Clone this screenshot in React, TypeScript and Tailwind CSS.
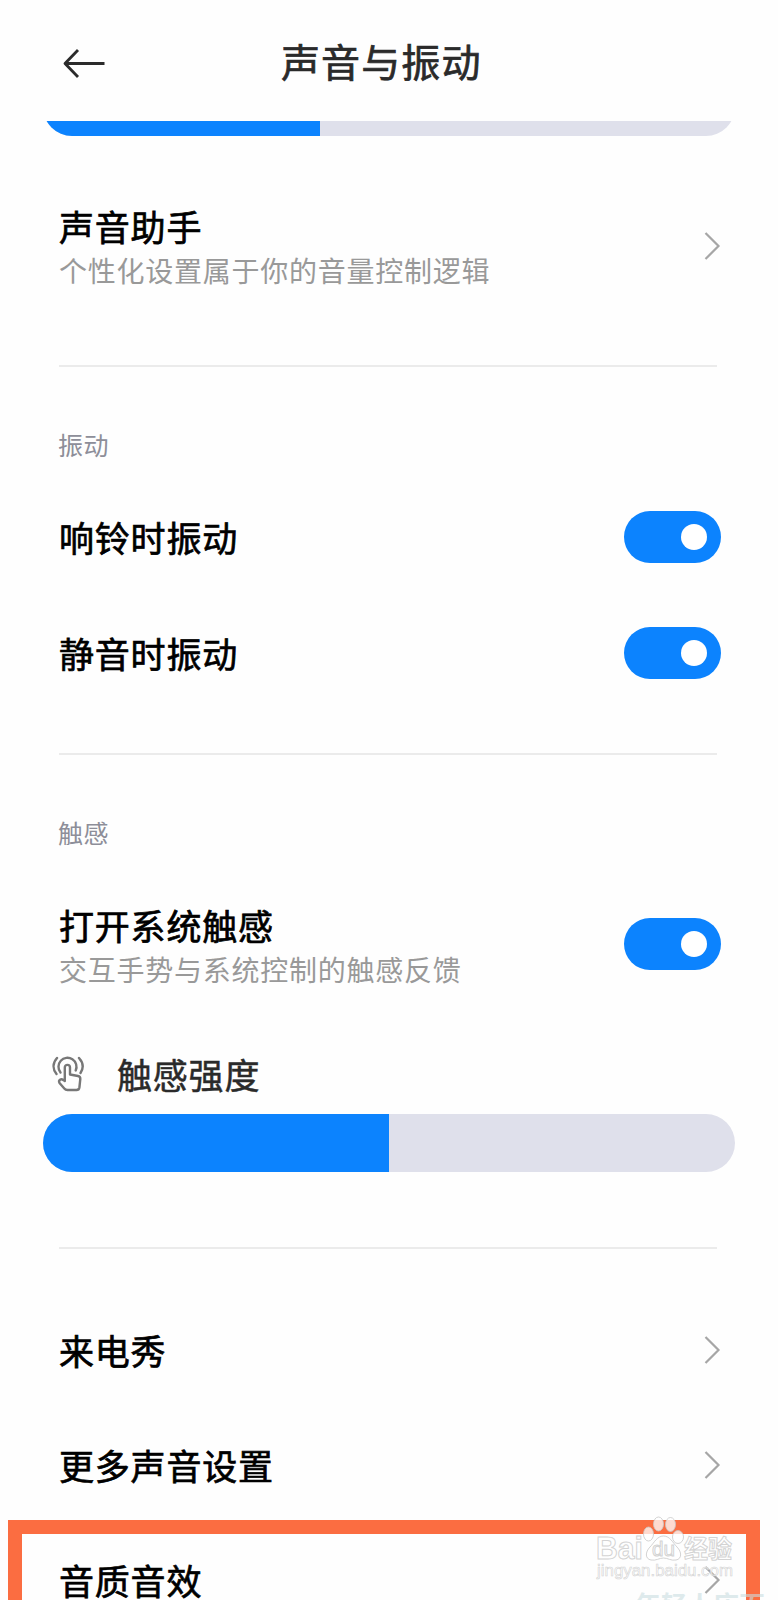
import React from "react";

function Toggle() {
  return (
    <div className="flex h-[52px] w-[97px] shrink-0 items-center justify-end rounded-full bg-[#0c83fe] pr-[14px]">
      <div className="h-[26px] w-[26px] rounded-full bg-white" />
    </div>
  );
}

function Chevron() {
  return (
    <svg width="18" height="30" viewBox="0 0 18 30" fill="none" className="shrink-0" stroke="#a6a6a6" strokeWidth="2.2">
      <path d="M2.5 2 L15.5 15 L2.5 28" />
    </svg>
  );
}

function TapIcon() {
  return (
    <svg width="32" height="36" viewBox="0 0 32 36" fill="none" stroke="#777" strokeWidth="2.4" strokeLinecap="round" strokeLinejoin="round">
      <path d="M5 2 C0.500 7 0.500 13 4.500 18" />
      <path d="M27 2 C31.500 7 31.500 12.500 28.500 17" />
      <path d="M8.500 16.500 A9 9 0 1 1 23.700 14.500" />
      <path d="M12.800 25 V11.500 a2.600 2.600 0 0 1 5.200 0 V18.500 L26 20 Q28.500 20.500 28.300 23 L27.400 31.500 Q27 34 24.500 34 H15.500 Q13.500 34 12.300 32.500 L7.500 27 Q6.400 25 8 23.800 Q9.600 22.800 11.200 24 L12.800 25" />
    </svg>
  );
}

function Title({ children }: { children: React.ReactNode }) {
  return (
    <span className="whitespace-nowrap text-[35px] leading-[44px] tracking-[0.8px] text-black [-webkit-text-stroke:0.7px_#000]">
      {children}
    </span>
  );
}

function Sub({ children }: { children: React.ReactNode }) {
  return (
    <span className="whitespace-nowrap text-[28px] leading-[44px] tracking-[0.75px] text-[#999999]">{children}</span>
  );
}

function Section({ children }: { children: React.ReactNode }) {
  return <div className="-ml-[1px] text-[25px] leading-[36px] tracking-[0.5px] text-[#8d8e99]">{children}</div>;
}

function Divider() {
  return <div className="mr-[4px] h-[2px] bg-[#ebebeb]" />;
}

function Slider({ fill }: { fill: number }) {
  return (
    <div className="h-[58px] w-[692px] shrink-0 overflow-hidden rounded-full bg-[#dfe0eb]">
      <div className="h-full bg-[#0c83fe]" style={{ width: fill }} />
    </div>
  );
}

function Watermark() {
  return (
    <svg width="160" height="84" viewBox="0 0 160 84" className="absolute left-[590px] top-[1512px]">
      <g fill="#fff" fillOpacity="0.75" stroke="#c8c8c8" strokeOpacity="0.8" strokeWidth="1">
        <ellipse cx="58.500" cy="22" rx="5" ry="7" />
        <ellipse cx="68.500" cy="12" rx="5" ry="7" />
        <ellipse cx="80.500" cy="12.500" rx="5" ry="7" />
        <ellipse cx="88" cy="25" rx="5.500" ry="6.500" />
        <path d="M73.500 24 C80 24 83 31 87 35 C92 40 92 47 86 48 C81 49 78 46 73.500 46 C69 46 66 49 61 48 C55 47 55 40 60 35 C64 31 67 24 73.500 24 Z" />
        <text x="6" y="47" fontFamily="Liberation Sans, sans-serif" fontWeight="700" fontSize="31" textLength="47" lengthAdjust="spacingAndGlyphs">Bai</text>
        <text x="62" y="44" fontFamily="Liberation Sans, sans-serif" fontSize="20" textLength="23" lengthAdjust="spacingAndGlyphs">du</text>
        <text x="94" y="46" fontFamily="'Noto Sans CJK SC', sans-serif" fontWeight="700" fontSize="25" textLength="48" lengthAdjust="spacingAndGlyphs">经验</text>
        <text x="7" y="64" fontFamily="Liberation Sans, sans-serif" fontSize="16.500" textLength="136" lengthAdjust="spacingAndGlyphs" strokeWidth="0.6">jingyan.baidu.com</text>
      </g>
    </svg>
  );
}

export default function App() {
  return (
    <div className="relative flex h-[1600px] w-[778px] flex-col overflow-hidden bg-[#fefefe] font-['Noto_Sans_CJK_SC',sans-serif]">
      <header className="flex h-[121px] shrink-0 pl-[62px]">
        <svg width="46" height="32" viewBox="0 0 46 32" fill="none" stroke="#2b2b2b" strokeWidth="2.8" className="mt-[47px] shrink-0">
          <path d="M42.500 16.500 H3 M16 3 L3 16.500 L16 30" strokeLinejoin="round" />
        </svg>
        <h1 className="ml-[173px] mt-[35px] text-[39px] leading-[50px] tracking-[1.1px] text-[#2a2a2a] [-webkit-text-stroke:0.7px_#2a2a2a]">
          声音与振动
        </h1>
      </header>

      <div className="flex h-[15px] shrink-0 items-end overflow-hidden pl-[43px]">
        <Slider fill={277} />
      </div>

      <main className="flex flex-col pl-[59px] pr-[57px]">
        <div className="mt-[68px] flex h-[84px] items-center justify-between">
          <div className="flex flex-col pt-[4px]">
            <Title>声音助手</Title>
            <Sub>个性化设置属于你的音量控制逻辑</Sub>
          </div>
          <Chevron />
        </div>
        <div className="h-[77px]" />
        <Divider />

        <div className="mt-[59px]"><Section>振动</Section></div>
        <div className="mt-[17px] flex h-[116px] items-center justify-between">
          <Title>响铃时振动</Title>
          <Toggle />
        </div>
        <div className="flex h-[115px] items-center justify-between">
          <Title>静音时振动</Title>
          <Toggle />
        </div>
        <div className="h-[43px]" />
        <Divider />

        <div className="mt-[59px]"><Section>触感</Section></div>
        <div className="mt-[50px] flex h-[88px] items-center justify-between">
          <div className="flex flex-col pt-[6px]">
            <Title>打开系统触感</Title>
            <Sub>交互手势与系统控制的触感反馈</Sub>
          </div>
          <Toggle />
        </div>
        <div className="-ml-[7px] mt-[63px] flex h-[46px] items-center">
          <TapIcon />
          <span className="ml-[33px] whitespace-nowrap text-[35px] leading-[44px] tracking-[0.8px] text-[#2a2a2a] [-webkit-text-stroke:0.5px_#2a2a2a]">
            触感强度
          </span>
        </div>
        <div className="-ml-[16px] mt-[17px]"><Slider fill={346} /></div>
        <div className="h-[75px]" />
        <Divider />

        <div className="mt-[43px] flex h-[115px] items-center justify-between">
          <Title>来电秀</Title>
          <Chevron />
        </div>
        <div className="flex h-[115px] items-center justify-between">
          <Title>更多声音设置</Title>
          <Chevron />
        </div>
        <div className="flex h-[115px] items-center justify-between">
          <Title>音质音效</Title>
          <Chevron />
        </div>
      </main>

      <div className="absolute left-[8px] top-[1520px] h-[120px] w-[752px] border-[14px] border-[#fb6d41]" />
      <Watermark />
      <div className="absolute left-[635px] top-[1586px] whitespace-nowrap text-[26px] font-bold leading-[36px] text-[#c9dde0]/60">年轻人店百</div>
    </div>
  );
}
